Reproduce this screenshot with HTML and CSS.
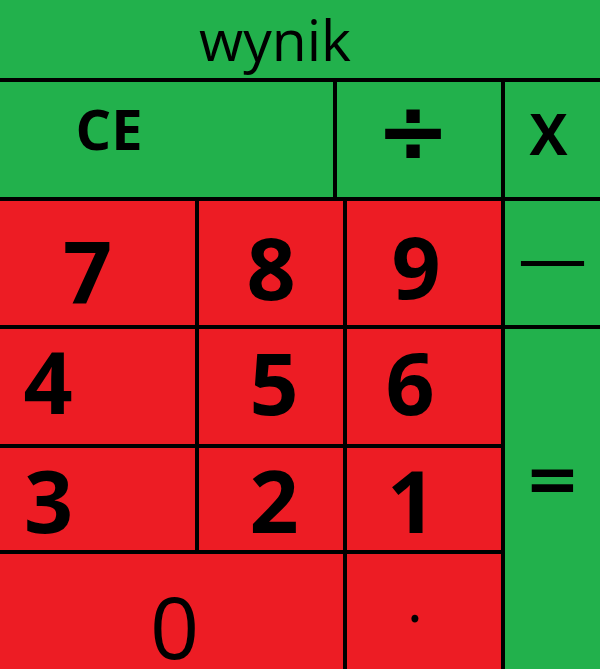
FILE: index.html
```html
<!DOCTYPE html>
<html lang="pl">
<head>
<meta charset="utf-8">
<title>Kalkulator</title>
<link rel="stylesheet" href="styles.css">
</head>
<body>
<div class="calc">
  <div class="display"><span class="display-text">wynik</span></div>
  <div class="ops">
    <div class="key op key-ce">CE</div>
    <div class="key sym key-div">÷</div>
    <div class="key op key-mul">X</div>
  </div>
  <div class="pad">
    <div class="key num k7">7</div>
    <div class="key num k8">8</div>
    <div class="key num k9">9</div>
    <div class="key sym key-minus">—</div>
    <div class="key num k4">4</div>
    <div class="key num k5">5</div>
    <div class="key num k6">6</div>
    <div class="key sym key-eq">=</div>
    <div class="key num k3">3</div>
    <div class="key num k2">2</div>
    <div class="key num k1">1</div>
    <div class="key num k0">0</div>
    <div class="key num kdot">.</div>
  </div>
</div>
</body>
</html>
```
FILE: styles.css
```css
html, body {
  margin: 0;
  padding: 0;
}
body {
  width: 600px;
  height: 669px;
  overflow: hidden;
  background: #000;
  font-family: "Open Sans", "Noto Sans", sans-serif;
  color: #000;
}
.calc {
  display: flex;
  flex-direction: column;
  gap: 4px;
  width: 600px;
  height: 669px;
  background: #000;
}
.display {
  height: 78px;
  background: #22b14c;
  display: flex;
  justify-content: center;
  align-items: flex-start;
  padding: 11px 50px 0 0;
  box-sizing: border-box;
}
.display-text {
  font-size: 57px;
  line-height: 1;
  font-weight: 400;
}
.ops {
  display: grid;
  grid-template-columns: 333px 164px 95px;
  gap: 4px;
  height: 115px;
}
.pad {
  display: grid;
  grid-template-columns: 195px 144px 154px 95px;
  grid-template-rows: 124px 115px 102px 115px;
  gap: 4px;
}
.key {
  display: flex;
  justify-content: center;
  align-items: flex-start;
  box-sizing: border-box;
  line-height: 1;
  background: #ed1c24;
}
.op, .sym {
  background: #22b14c;
}
.op {
  font-size: 56px;
  font-weight: 700;
}
.sym {
  font-family: "DejaVu Sans", sans-serif;
  font-weight: 700;
  align-items: center;
}
.num {
  font-size: 86px;
  font-weight: 700;
}
.key-ce { padding: 18px 115px 0 0; }
.key-mul { padding: 23px 8px 0 0; font-size: 57px; }
.key-div { font-size: 89px; padding: 0 12px 17px 0; }
.key-minus { font-size: 70px; font-weight: 400; padding: 0 0 8px 0; }
.key-eq { grid-column: 4; grid-row: 2 / 5; font-size: 66px; padding: 0 0 39px 0; }

.k7 { padding: 27px 20px 0 0; }
.k8 { padding: 23px 0 0 0; }
.k9 { padding: 22px 16px 0 0; }
.k4 { padding: 9px 99px 0 0; }
.k5 { padding: 10px 0 0 6px; }
.k6 { padding: 10px 28px 0 0; }
.k3 { padding: 9px 98px 0 0; }
.k2 { padding: 9px 0 0 6px; }
.k1 { padding: 9px 25px 0 0; }
.k0 { grid-column: 1 / 3; font-weight: 400; padding: 29px 0 0 6px; }
.kdot { font-size: 60px; font-weight: 400; padding: 15px 18px 0 0; }
```
